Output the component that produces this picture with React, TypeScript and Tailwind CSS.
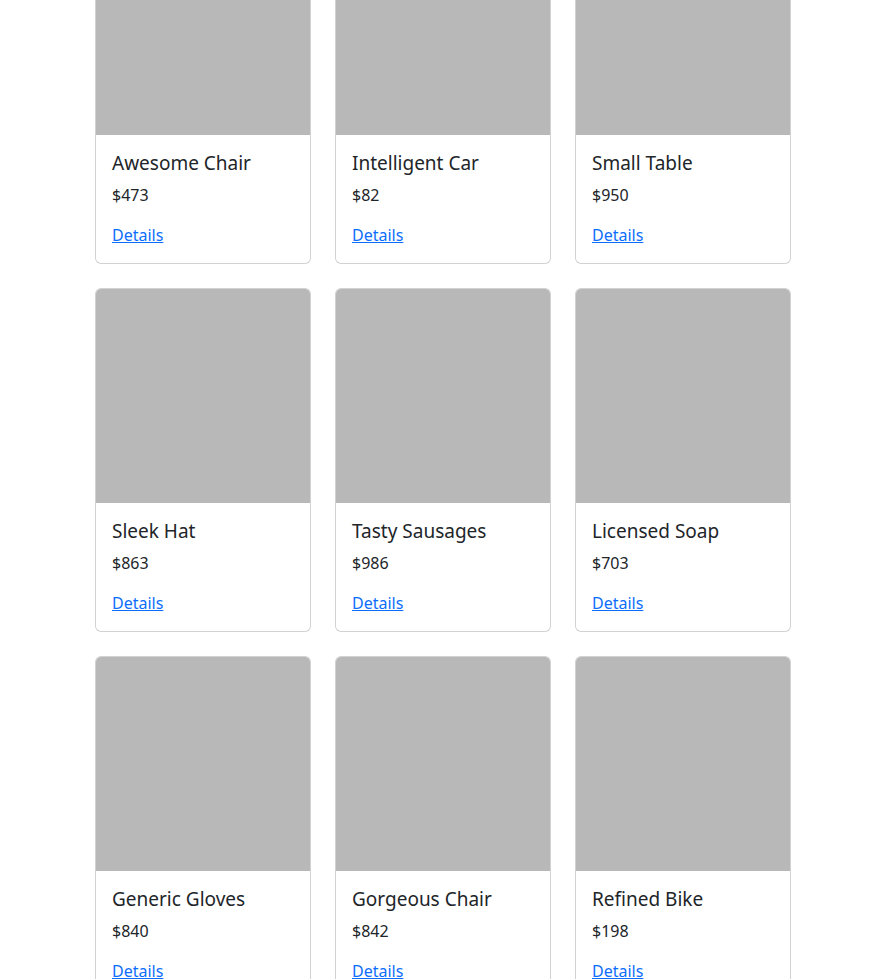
const products = [
  { name: "Awesome Chair", price: 473 },
  { name: "Intelligent Car", price: 82 },
  { name: "Small Table", price: 950 },
  { name: "Sleek Hat", price: 863 },
  { name: "Tasty Sausages", price: 986 },
  { name: "Licensed Soap", price: 703 },
  { name: "Generic Gloves", price: 840 },
  { name: "Gorgeous Chair", price: 842 },
  { name: "Refined Bike", price: 198 },
];

const ProductCard = ({ name, price }: { name: string; price: number }) => {
  return (
    <div className="flex flex-col rounded-[6px] border border-black/[0.175] bg-white overflow-hidden">
      <div className="aspect-square w-full bg-[#b8b8b8]" />
      <div className="p-4">
        <h5 className="mb-2 pt-px text-[19px] leading-[23px] text-[#212529]">{name}</h5>
        <p className="mb-4 text-[16px] leading-[24px] text-[#212529]">${price}</p>
        <a href="#" className="text-[16px] leading-[24px] text-[#0d6efd] underline">
          Details
        </a>
      </div>
    </div>
  );
};

export default function App() {
  return (
    <div className="min-h-screen bg-white font-['Noto_Sans',sans-serif]">
      <div className="mx-auto -mt-[80px] w-[720px] px-3">
        <div className="grid grid-cols-3 gap-6">
          {products.map((p) => (
            <ProductCard key={p.name} name={p.name} price={p.price} />
          ))}
        </div>
      </div>
    </div>
  );
}
